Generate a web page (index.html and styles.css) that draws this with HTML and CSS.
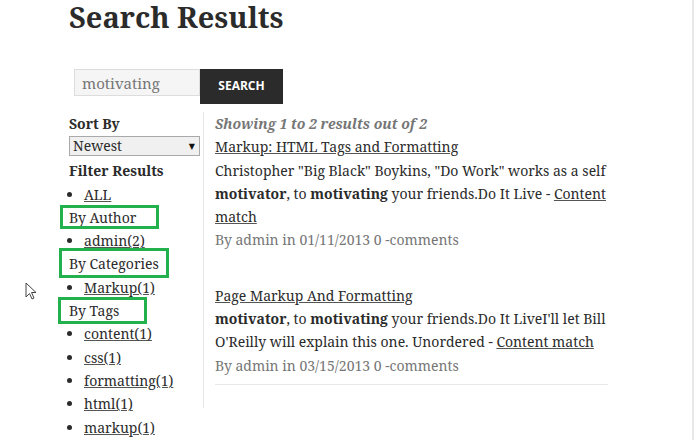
FILE: index.html
```html
<!DOCTYPE html>
<html>
<head>
<meta charset="utf-8">
<link rel="stylesheet" href="styles.css">
</head>
<body>
<div class="page">
  <h1 class="title">Search Results</h1>
  <form class="search">
    <input class="search-input" type="text" placeholder="motivating">
    <button class="search-btn" type="button">SEARCH</button>
  </form>
  <div class="cols">
    <aside class="sidebar">
      <div class="side-head">Sort By</div>
      <div class="select"><span>Newest</span><span class="arrow">&#9660;</span></div>
      <div class="side-head">Filter Results</div>
      <ul class="list"><li><a href="#">ALL</a></li></ul>
      <div class="group g-author">By Author</div>
      <ul class="list"><li><a href="#">admin(2)</a></li></ul>
      <div class="group g-cat">By Categories</div>
      <ul class="list"><li><a href="#">Markup(1)</a></li></ul>
      <div class="group g-tags">By Tags</div>
      <ul class="list">
        <li><a href="#">content(1)</a></li>
        <li><a href="#">css(1)</a></li>
        <li><a href="#">formatting(1)</a></li>
        <li><a href="#">html(1)</a></li>
        <li><a href="#">markup(1)</a></li>
      </ul>
    </aside>
    <main class="results">
      <div class="showing">Showing 1 to 2 results out of 2</div>
      <div class="result">
        <a class="r-title" href="#">Markup: HTML Tags and Formatting</a>
        <p class="r-text">Christopher "Big Black" Boykins, "Do Work" works as a self <b>motivator</b>, to <b>motivating</b> your friends.Do It Live - <a href="#">Content match</a></p>
        <div class="meta">By admin in 01/11/2013 0 -comments</div>
      </div>
      <div class="result">
        <a class="r-title" href="#">Page Markup And Formatting</a>
        <p class="r-text"><b>motivator</b>, to <b>motivating</b> your friends.Do It LiveI'll let Bill O'Reilly will explain this one. Unordered - <a href="#">Content match</a></p>
        <div class="meta">By admin in 03/15/2013 0 -comments</div>
      </div>
      <hr class="rule">
    </main>
  </div>
</div>
<div class="cursor">
<svg width="14" height="20" viewBox="0 0 14 20"><path d="M1 1 L1 15 L4.5 11.5 L7 17 L9 16 L6.5 10.5 L11 10.5 Z" fill="#fff" stroke="#444" stroke-width="1"/></svg>
</div>
<div class="edge"></div>
</body>
</html>
```
FILE: styles.css
```css
html, body { margin: 0; padding: 0; background: #fff; }
body { font-family: "Noto Serif", "DejaVu Serif", serif; color: #2b2b2b; }
.page { padding-left: 69px; }
.title { font-size: 29px; font-weight: 700; margin: 0; line-height: 34px; color: #2b2b2b; }
.search { display: flex; align-items: flex-start; margin: 35px 0 0 5px; }
.search-input { width: 126px; height: 27px; box-sizing: border-box; border: 1px solid #ddd; background: #f5f5f5; font-family: inherit; font-size: 15px; padding: 0 7px; outline: none; }
.search-input::placeholder { color: #767676; }
.search-btn { width: 83px; height: 35px; border: 0; background: #2b2b2b; color: #fff; font-family: "Open Sans", sans-serif; font-weight: 700; font-size: 12px; padding: 0 0 2px; }
.cols { display: flex; align-items: flex-start; margin-top: 8px; }
.sidebar { width: 134px; font-size: 14px; line-height: 23.3px; }
.side-head { font-weight: 700; font-size: 14px; }
.select { display: flex; justify-content: space-between; align-items: center; width: 131px; height: 20px; box-sizing: border-box; border: 1px solid #a9a9a9; background: #f0f0f0; padding: 0 4px 0 3px; font-size: 14px; line-height: 18px; margin: 1px 0 3px; }
.arrow { font-size: 8px; color: #111; }
.list { margin: 0; padding: 0 0 0 15px; list-style: disc; }
.list a, .results a { color: #2b2b2b; text-decoration: underline; text-decoration-color: #555; }
.group { position: relative; }
.group::before { content: ""; position: absolute; border: 3px solid #22b14c; box-sizing: border-box; }
.g-author::before { left: -9px; top: -1px; width: 99px; height: 24px; }
.g-cat::before { left: -10px; top: -4px; width: 110px; height: 30px; }
.g-tags::before { left: -11px; top: -2px; width: 89px; height: 27px; }
.results { width: 393px; padding-left: 11px; padding-bottom: 23px; border-left: 1px solid #e8e8e8; font-size: 14px; line-height: 23.3px; }
.showing { font-style: italic; font-weight: 700; color: #767676; }
.result { margin-bottom: 32px; }
.result:last-of-type { margin-bottom: 0; }
.r-text { margin: 0; }
.meta { color: #767676; }
.rule { border: 0; border-top: 1px solid #e8e8e8; margin: 7px 0 0; }
.cursor { position: absolute; left: 25px; top: 282px; }
.edge { position: absolute; right: 0; top: 0; width: 2px; height: 440px; background: #e8e8e8; }
```
